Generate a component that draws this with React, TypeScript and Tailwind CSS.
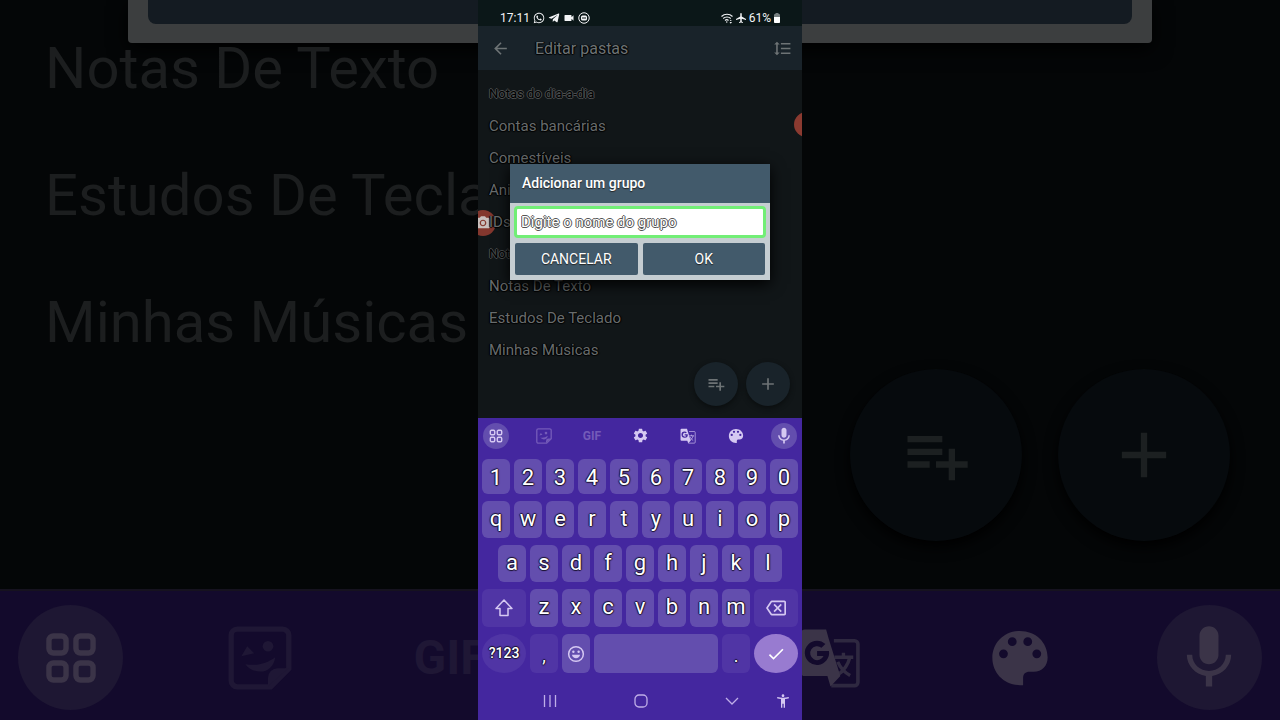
import { FaTelegramPlane, FaWhatsapp } from "react-icons/fa"
import {
    MdAccessibilityNew, MdAdd, MdAirplanemodeActive, MdArrowBack, MdCheck, MdFormatLineSpacing,
    MdMic, MdOutlineBackspace, MdPhotoCamera, MdPlaylistAdd, MdSettings, MdVideocam,
} from "react-icons/md"

const folders = [
    { name: "Notas do dia-a-dia", dark: true },
    { name: "Contas bancárias" },
    { name: "Comestíveis" },
    { name: "Ani" },
    { name: "IDs" },
    { name: "Not", dark: true },
    { name: "Notas De Texto" },
    { name: "Estudos De Teclado" },
    { name: "Minhas Músicas" },
]

const lightText = "[text-shadow:0_1px_1px_#000,1px_0_1px_#000,-1px_0_1px_#000]"
const darkText = "text-black [text-shadow:1px_0_0_#4a4d4e,-1px_0_0_#4a4d4e,0_1px_0_#4a4d4e,0_-1px_0_#4a4d4e]"
const keyText = "text-white [text-shadow:1px_0_1px_#1b1330,-1px_0_1px_#1b1330,0_1px_1px_#1b1330,0_-1px_1px_#1b1330]"

function GridIcon({ className }: { className: string }) {
    return <svg viewBox="0 0 24 24" className={className} fill="none" stroke="currentColor" strokeWidth="2.4">
        <rect x="2.2" y="2.2" width="7.6" height="7.6" rx="2" />
        <rect x="14.2" y="2.2" width="7.6" height="7.6" rx="2" />
        <rect x="2.2" y="14.2" width="7.6" height="7.6" rx="2" />
        <rect x="14.2" y="14.2" width="7.6" height="7.6" rx="2" />
    </svg>
}

function StickerIcon({ className }: { className: string }) {
    return <svg viewBox="0 0 24 24" className={className} fill="currentColor">
        <path d="M3.5 1.2h17a2.3 2.3 0 0 1 2.3 2.3V16l-6.8 6.8H3.5a2.3 2.3 0 0 1-2.3-2.3v-17a2.3 2.3 0 0 1 2.3-2.3z" fill="none" stroke="currentColor" strokeWidth="2" />
        <path d="M15 22.6v-3.2a3.6 3.6 0 0 1 3.6-3.6h4z" />
        <path d="M5 11.3 7.2 7.6l2.6 2.6z" />
        <circle cx="15" cy="7.6" r="2" />
        <path d="M6.5 14.3c4 .8 8-.2 11.2-2.6-.4 3.3-2.7 5.4-5.6 5.4-2.3-.1-4.3-1-5.6-2.8z" />
    </svg>
}

function PaletteIcon({ className }: { className: string }) {
    return <svg viewBox="0 0 24 24" className={className} fill="currentColor" fillRule="evenodd">
        <path d="M12 1.500C5.800 1.500 1.300 6.100 1.300 12S6 22.500 12 22.500h1.200v-2.700c0-1.700.9-2.500 2.500-2.500h1.600c3.200 0 5.400-2.300 5.400-5.500C22.700 5.800 18 1.500 12 1.500zM5.600 12.100a1.700 1.700 0 1 1 0-3.400 1.700 1.700 0 0 1 0 3.400zM9 7.400A1.700 1.700 0 1 1 9 4a1.700 1.700 0 0 1 0 3.400zm6 0A1.700 1.700 0 1 1 15 4a1.700 1.700 0 0 1 0 3.400zm3.500 4.700a1.700 1.700 0 1 1 0-3.400 1.700 1.700 0 0 1 0 3.400z" />
    </svg>
}

function TranslateIcon({ className }: { className: string }) {
    return <svg viewBox="0 0 24 24" className={className} fill="none" stroke="currentColor">
        <path d="M13.500 5.300h8a1.300 1.300 0 0 1 1.300 1.300v14.800a1.300 1.300 0 0 1-1.300 1.300h-9" strokeWidth="1.400" opacity="0.7" />
        <path d="M13.700 11.700h7.300M17.200 10v1.700M19.700 11.700c-.8 3.200-2.600 5.400-4.700 6.800M15 13.500c1 2.300 2.500 4 4.800 5.300" strokeWidth="1.300" opacity="0.8" />
        <path fill="currentColor" stroke="none" fillRule="evenodd" d="M2.300 1h8.200l1 3.500 4.500 14.500-3.800 4-1.200-4H2.300A1.500 1.500 0 0 1 .8 17.500v-15A1.500 1.500 0 0 1 2.300 1zM7 5.300a4.700 4.700 0 1 0 4.600 4H7v1.900h2.500A2.700 2.700 0 1 1 8.700 8l1.500-1.400A4.700 4.700 0 0 0 7 5.300z" />
    </svg>
}

function WifiIcon() {
    return <svg viewBox="0 0 24 24" className="size-3" fill="none" stroke="currentColor" strokeWidth="2.2">
        <path d="M1 9c6-6 16-6 22 0M4.500 13c4-4 11-4 15 0M8 17c2-2 5-2 7 0" />
        <circle cx="11.500" cy="20" r="1.500" fill="currentColor" stroke="none" />
        <path d="M17 20h5l-2.500 3.500zM17.500 18l2-2.500 2 2.500z" fill="currentColor" stroke="none" />
    </svg>
}

function Key({ label, className }: { label: string, className: string }) {
    return <button className={`flex items-center justify-center rounded-md bg-[#634eae] text-[22px] leading-none ${keyText} ${className}`}>{label}</button>
}

// Enlarged and dimmed slice of the same screen, shown on both sides of the phone
function Backdrop() {
    return <div aria-hidden="true" className="col-start-1 row-start-1 flex min-w-0 flex-col bg-[#040607]">
        <div className="mx-auto h-[43px] w-4/5 rounded-b-sm bg-[#3c3e3f] px-5 pb-[19px] shadow-[0_6px_20px_#000]">
            <div className="h-full rounded-b-lg bg-[#141b22]"></div>
        </div>
        <div className="flex flex-col gap-[77px] pl-[45px] text-[58px] leading-[50px] text-[#1c1e1f]">
            <p>Notas De Texto</p>
            <p>Estudos De Tecla</p>
            <p>Minhas Músicas</p>
        </div>
        <div className="mt-auto mb-12 flex justify-end gap-9 pr-[50px] text-[#1c2021]">
            <div className="flex size-[172px] items-center justify-center rounded-full bg-[#060a0d] shadow-[0_6px_14px_#000]">
                <MdPlaylistAdd className="size-[76px]" />
            </div>
            <div className="flex size-[172px] items-center justify-center rounded-full bg-[#060a0d] shadow-[0_6px_14px_#000]">
                <MdAdd className="size-[76px]" />
            </div>
        </div>
        <div className="flex h-[131px] items-center justify-between border-t-2 border-[#16121f] bg-[#130a2c] px-[18px] pt-1 text-[#3b3448]">
            <div className="flex size-[105px] items-center justify-center rounded-full bg-[#1e1733]"><GridIcon className="size-[54px]" /></div>
            <div className="flex w-[105px] justify-center text-[#1f1735]"><StickerIcon className="size-[64px]" /></div>
            <div className="w-[105px] text-center text-[48px] font-bold text-[#1f1735]">GIF</div>
            <div className="flex w-[105px] justify-center"><MdSettings className="size-[66px]" /></div>
            <div className="flex w-[105px] justify-center"><TranslateIcon className="size-[62px]" /></div>
            <div className="flex w-[105px] justify-center"><PaletteIcon className="size-[62px]" /></div>
            <div className="flex size-[105px] items-center justify-center rounded-full bg-[#1e1733]"><MdMic className="size-[76px]" /></div>
        </div>
    </div>
}

function StatusBar() {
    return <div className="flex h-[26px] items-center justify-between bg-[#0b1718] pt-2.5 pr-[21px] pl-[22px] text-xs text-gray-100">
        <div className="flex items-center gap-[3px]">
            <span>17:11</span>
            <FaWhatsapp className="size-3" />
            <FaTelegramPlane className="size-3" />
            <MdVideocam className="size-3" />
            <svg viewBox="0 0 24 24" className="size-3" fill="none" stroke="currentColor" strokeWidth="2">
                <circle cx="12" cy="12" r="10.500" />
                <rect x="6" y="7" width="12" height="10" rx="3" fill="currentColor" stroke="none" />
                <path d="M10 10v4M14 10v4" stroke="#0b1718" />
            </svg>
        </div>
        <div className="flex items-center gap-0.5">
            <WifiIcon />
            <MdAirplanemodeActive className="size-3" />
            <span>61%</span>
            <svg viewBox="0 0 8 12" className="h-3 w-2">
                <path d="M2.500 1h3v1.500h-3z" fill="#777f80" />
                <rect x="1" y="2" width="6" height="9" rx="1" fill="#777f80" />
                <path d="M1 5h6v5a1 1 0 0 1-1 1H2a1 1 0 0 1-1-1z" fill="#fff" />
            </svg>
        </div>
    </div>
}

function GroupDialog() {
    return <div className="absolute inset-0 flex items-center px-8">
        <form role="dialog" aria-labelledby="dialog-title" className="w-full bg-[#c5cdd1] shadow-[0_4px_14px_#000]" onSubmit={(e) => e.preventDefault()}>
            <h2 id="dialog-title" className="bg-[#425a6b] pl-3 text-sm leading-[39px] font-medium text-white [text-shadow:0_1px_1px_#222]">Adicionar um grupo</h2>
            <div className="flex flex-col gap-[5px] px-1 pt-[3px] pb-[5px]">
                <input aria-label="Nome do grupo" placeholder="Digite o nome do grupo"
                    className="h-8 w-full rounded-sm border-3 border-[#72ee76] bg-white pl-1 text-[15px] outline-none placeholder:text-white placeholder:[text-shadow:1px_0_0_#555,-1px_0_0_#555,0_1px_0_#555,0_-1px_0_#555]" />
                <div className="flex gap-[5px] px-px text-sm text-white">
                    <button type="button" className="h-8 flex-1 rounded-xs bg-[#425a6b] [text-shadow:0_1px_1px_#222]">CANCELAR</button>
                    <button type="submit" className="h-8 flex-1 rounded-xs bg-[#425a6b] [text-shadow:0_1px_1px_#222]">OK</button>
                </div>
            </div>
        </form>
    </div>
}

function Keyboard() {
    return <div className="bg-[#44279f] text-[#d5c8f2]">
        <div className="flex h-[35px] items-center justify-between px-[5px]">
            <button aria-label="Menu" className="flex size-[26px] items-center justify-center rounded-full bg-[#634eae]"><GridIcon className="size-[14px]" /></button>
            <button aria-label="Figurinhas" className="flex w-[26px] justify-center text-[#745bb9]"><StickerIcon className="size-4" /></button>
            <button className="w-[26px] text-xs font-bold text-[#745bb9]">GIF</button>
            <button aria-label="Configurações" className="flex w-[26px] justify-center"><MdSettings className="size-[17px]" /></button>
            <button aria-label="Traduzir" className="flex w-[26px] justify-center"><TranslateIcon className="size-4" /></button>
            <button aria-label="Temas" className="flex w-[26px] justify-center"><PaletteIcon className="size-4" /></button>
            <button aria-label="Voz" className="flex size-[26px] items-center justify-center rounded-full bg-[#634eae]"><MdMic className="size-5" /></button>
        </div>
        <div className="flex flex-col gap-[7px] px-1 pt-1.5">
            <div className="flex gap-1">
                {"1234567890".split("").map((k) => <Key key={k} label={k} className="h-[35px] flex-1 pt-0.5" />)}
            </div>
            <div className="flex gap-1">
                {"qwertyuiop".split("").map((k) => <Key key={k} label={k} className="h-[37px] flex-1 pb-0.5" />)}
            </div>
            <div className="flex gap-1 px-4">
                {"asdfghjkl".split("").map((k) => <Key key={k} label={k} className="h-[37px] flex-1 pb-0.5" />)}
            </div>
            <div className="flex gap-1">
                <button aria-label="Shift" className="flex h-[38px] w-11 items-center justify-center rounded-md bg-[#5035a5]">
                    <svg viewBox="0 0 20 20" className="size-5" fill="none" stroke="currentColor" strokeWidth="1.500" strokeLinejoin="round">
                        <path d="M10 2 2 10.500h4V17.500h8v-7h4z" />
                    </svg>
                </button>
                {"zxcvbnm".split("").map((k) => <Key key={k} label={k} className="h-[38px] flex-1 pb-0.5" />)}
                <button aria-label="Apagar" className="flex h-[38px] w-11 items-center justify-center rounded-md bg-[#5035a5]"><MdOutlineBackspace className="size-5" /></button>
            </div>
            <div className="flex h-[39px] gap-1">
                <button className={`w-11 rounded-[50%] bg-[#5035a5] pb-0.5 text-sm font-medium ${keyText}`}>?123</button>
                <button className={`w-7 rounded-md bg-[#5035a5] pt-1 text-lg ${keyText}`}>,</button>
                <button aria-label="Emoji" className="flex w-7 items-center justify-center rounded-md bg-[#634eae]">
                    <svg viewBox="0 0 24 24" className="size-[18px]" fill="currentColor">
                        <circle cx="12" cy="12" r="9.800" fill="none" stroke="currentColor" strokeWidth="2" />
                        <circle cx="8.500" cy="9" r="1.600" />
                        <circle cx="15.500" cy="9" r="1.600" />
                        <path d="M6.500 13h11c-.7 2.900-2.800 4.700-5.500 4.700S7.200 15.900 6.500 13z" />
                    </svg>
                </button>
                <button aria-label="Espaço" className="flex-1 rounded-md bg-[#634eae]"></button>
                <button className={`w-7 rounded-md bg-[#5035a5] pt-1 text-lg ${keyText}`}>.</button>
                <button aria-label="Concluir" className="flex w-11 items-center justify-center rounded-[50%] bg-[#987bd0] text-white"><MdCheck className="size-5" /></button>
            </div>
        </div>
        <div className="flex h-[47px] items-center pt-2 text-[#bfaee8]">
            <button aria-label="Recentes" className="ml-16 flex w-4 justify-center">
                <svg viewBox="0 0 14 14" className="size-3.5" stroke="currentColor" strokeWidth="1.300"><path d="M1.500 1v12M7 1v12M12.500 1v12" /></svg>
            </button>
            <button aria-label="Início" className="ml-[76px] flex w-[14px] justify-center">
                <svg viewBox="0 0 14 14" className="size-3.5" fill="none" stroke="currentColor" strokeWidth="1.300"><rect x="1" y="1" width="12" height="12" rx="4" /></svg>
            </button>
            <button aria-label="Voltar" className="ml-[77px] flex w-[14px] justify-center">
                <svg viewBox="0 0 14 14" className="size-3.5" fill="none" stroke="currentColor" strokeWidth="1.300"><path d="m1 4 6 6 6-6" /></svg>
            </button>
            <button aria-label="Acessibilidade" className="mr-3 ml-auto flex w-[14px] justify-center text-[#d5c8f2]"><MdAccessibilityNew className="size-4 shrink-0" /></button>
        </div>
    </div>
}

export default function App() {
    return <main className="grid min-h-screen grid-cols-1 font-['Roboto',sans-serif]">
        <Backdrop />
        <div className="z-10 col-start-1 row-start-1 mx-auto flex w-[324px] flex-col overflow-hidden bg-[#111618]">
            <StatusBar />
            <section className="relative flex-1 overflow-hidden">
                <header className="flex h-11 items-center bg-[#19232a] pt-px pr-2.5 pl-[13px] text-[#6d7375]">
                    <button aria-label="Voltar"><MdArrowBack className="size-[19px]" /></button>
                    <h1 className={`ml-[25px] text-base ${lightText}`}>Editar pastas</h1>
                    <button aria-label="Ordenar" className="ml-auto"><MdFormatLineSpacing className="size-[19px]" /></button>
                </header>
                <div className="absolute top-[184px] -left-2 flex size-[26px] items-center justify-center rounded-full bg-[#83372e] text-[#c9c0be]"><MdPhotoCamera className="size-4" /></div>
                <div className="absolute top-[86px] -right-[17px] size-[25px] rounded-full bg-[#8b3a30]"></div>
                <ul className="relative pt-2 pl-[11px]">
                    {folders.map((f) => <li key={f.name} className={`leading-8 ${f.dark ? `text-[13px] ${darkText}` : `text-[15px] text-[#686c6d] ${lightText}`}`}>{f.name}</li>)}
                </ul>
                <div className="absolute right-3 bottom-3 flex gap-2 text-[#6d7375]">
                    <button aria-label="Adicionar à lista" className="flex size-11 items-center justify-center rounded-full bg-[#19232a] shadow-[0_2px_5px_#0a0d0e]"><MdPlaylistAdd className="size-5" /></button>
                    <button aria-label="Adicionar" className="flex size-11 items-center justify-center rounded-full bg-[#19232a] shadow-[0_2px_5px_#0a0d0e]"><MdAdd className="size-5" /></button>
                </div>
                <GroupDialog />
            </section>
            <Keyboard />
        </div>
    </main>
}
